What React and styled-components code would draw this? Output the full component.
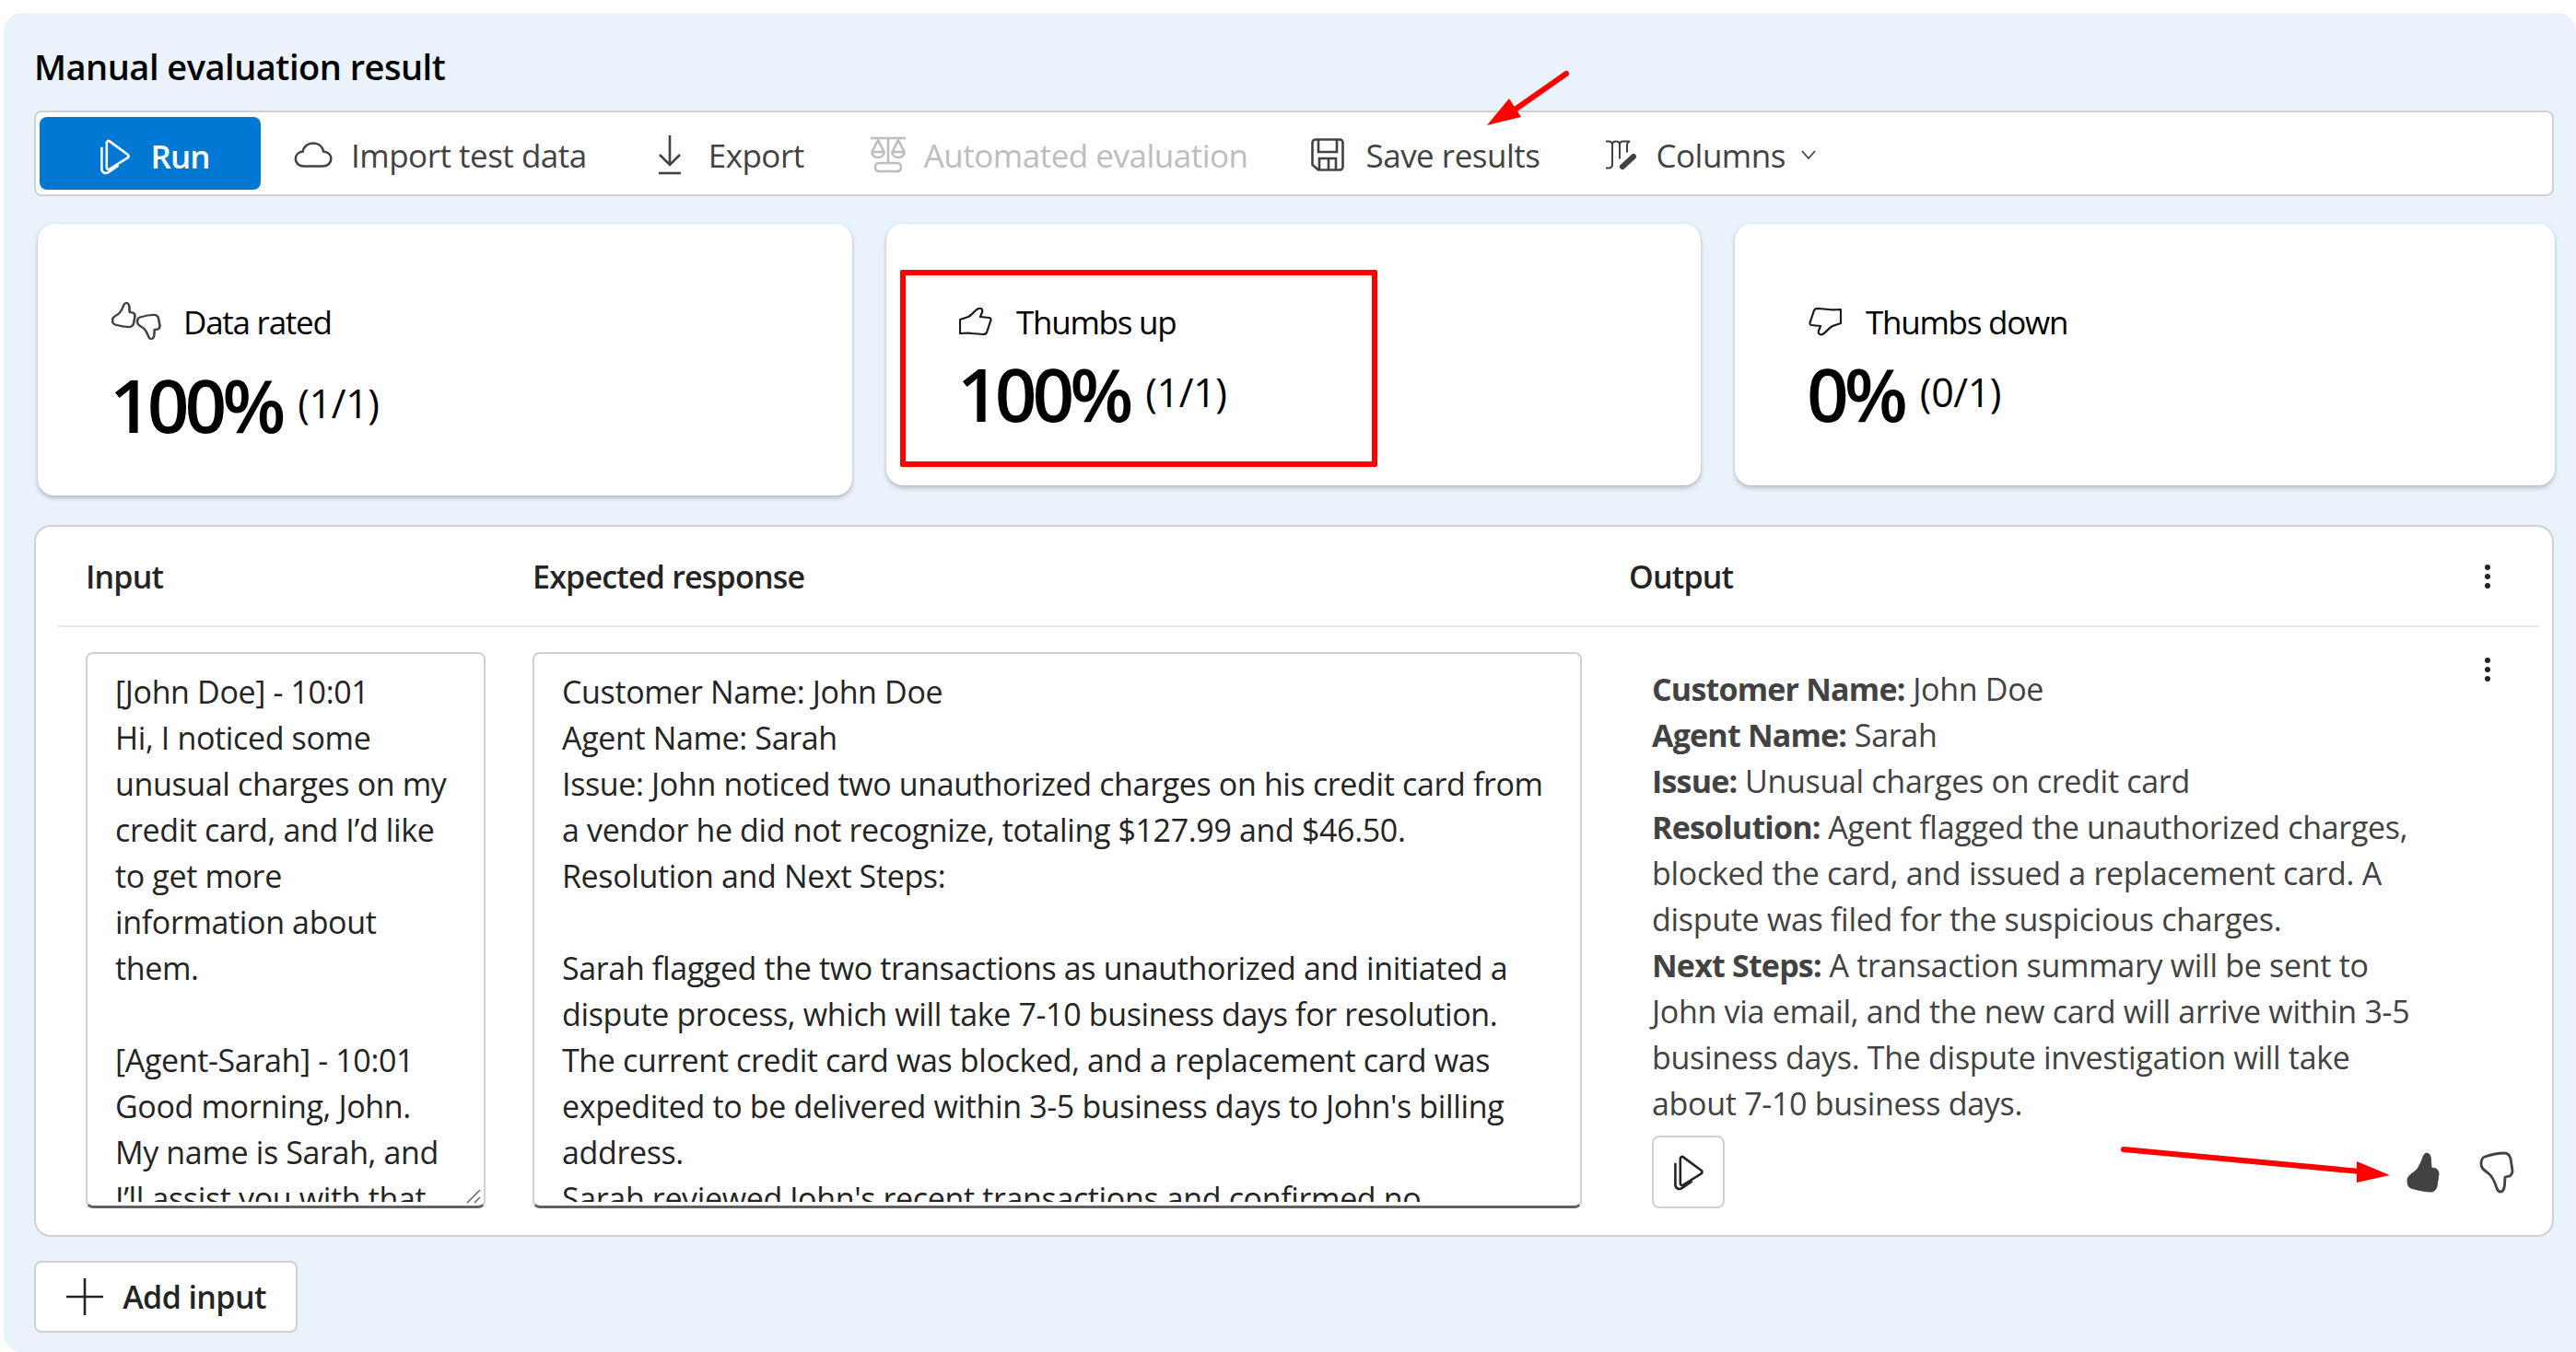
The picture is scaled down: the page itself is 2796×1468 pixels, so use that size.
import React from "react";
import styled, { createGlobalStyle } from "styled-components";

const Global = createGlobalStyle`
  html, body { margin: 0; padding: 0; background: #fff; }
  body { font-family: "Open Sans", "Noto Sans", sans-serif; color: #242424; }
`;

const Page = styled.div`
  position: relative;
  width: 2796px;
  height: 1468px;
  overflow: hidden;
  padding: 14px 0 0 4px;
  box-sizing: border-box;
`;
const Panel = styled.main`
  height: 1454px;
  background: #eaf2fb;
  border-radius: 20px 20px 0 20px;
  padding: 30px 24px 0 33px;
  box-sizing: border-box;
`;
const Title = styled.h1`
  margin: 0 0 20px;
  font-size: 38px;
  line-height: 56px;
  font-weight: 600;
  color: #000;
  letter-spacing: -0.5px;
`;
const Toolbar = styled.div`
  height: 93px;
  box-sizing: border-box;
  background: #fff;
  border: 2px solid #d1d1d1;
  border-radius: 8px;
  display: flex;
  align-items: center;
  padding-left: 4px;
`;
const RunButton = styled.button`
  width: 240px;
  height: 79px;
  border: 0;
  border-radius: 8px;
  background: #0078d4;
  color: #fff;
  font: 600 35px "Open Sans", sans-serif;
  letter-spacing: -1px;
  display: flex;
  align-items: center;
  justify-content: center;
  gap: 20px;
  padding: 6px 0 0 7px;
  margin-right: 36px;
`;
const ToolItem = styled.div`
  display: flex;
  align-items: center;
  gap: ${(p) => p.$gap ?? 24}px;
  margin-right: ${(p) => p.$mr}px;
  font-size: 35px;
  font-weight: 500;
  letter-spacing: -0.5px;
  white-space: nowrap;
  color: ${(p) => (p.$disabled ? "#bdbdbd" : "#424242")};
  padding-top: 3px;
`;
const Cards = styled.div`
  display: flex;
  align-items: flex-start;
  gap: 37px;
  margin: 30px 0 32px 4px;
`;
const Card = styled.section`
  flex: 0 0 ${(p) => p.$w}px;
  height: ${(p) => p.$h}px;
  box-sizing: border-box;
  background: #fff;
  border-radius: 18px;
  box-shadow: 0 3px 5px rgba(0, 0, 0, 0.22), 0 0 3px rgba(0, 0, 0, 0.08);
  padding: ${(p) => p.$pt}px 0 0 ${(p) => p.$pl}px;
`;
const CardHead = styled.div`
  display: flex;
  align-items: center;
  gap: ${(p) => p.$gap ?? 26}px;
  height: 50px;
  font-size: 35px;
  letter-spacing: -1.25px;
  color: #000;
`;
const Stat = styled.div`
  display: flex;
  align-items: baseline;
  gap: 18px;
  margin: ${(p) => p.$mt}px 0 0 -2px;
  color: #000;
`;
const Percent = styled.span`
  font-size: 80px;
  line-height: 96px;
  font-weight: 600;
  letter-spacing: -5px;
`;
const Ratio = styled.span`
  font-size: 43px;
  letter-spacing: -0.4px;
  position: relative;
  top: -16px;
`;
const Table = styled.section`
  height: 773px;
  box-sizing: border-box;
  background: #fff;
  border: 2px solid #d1d1d1;
  border-radius: 18px;
  overflow: hidden;
`;
const HeadRow = styled.div`
  height: 109px;
  margin: 0 14px 0 24px;
  border-bottom: 2px solid #e6e6e6;
  box-sizing: border-box;
  display: grid;
  grid-template-columns: 485px 1190px 1fr 60px;
  align-items: center;
  padding-left: 30px;
  font-size: 34px;
  font-weight: 600;
  letter-spacing: -0.8px;
  color: #242424;
`;
const BodyRow = styled.div`
  display: grid;
  grid-template-columns: 434px 1139px 1fr;
  column-gap: 51px;
  padding: 27px 0 0 54px;
`;
const Area = styled.div`
  position: relative;
  height: 604px;
  box-sizing: border-box;
  border: 2px solid #d1d1d1;
  border-bottom: 3px solid #616161;
  border-radius: 8px;
  padding: 0 ${(p) => p.$pr}px 0 30px;
  overflow: hidden;
  font-size: 34px;
  line-height: 50px;
  letter-spacing: -0.36px;
  color: #242424;
  white-space: pre-wrap;
`;
const AreaText = styled.div`
  height: 595px;
  box-sizing: border-box;
  padding-top: 16px;
  overflow: hidden;
`;
const Grip = styled.svg`
  position: absolute;
  right: 1px;
  bottom: 1px;
`;
const OutputCell = styled.div`
  position: relative;
  padding: 0 0 0 25px;
`;
const OutputText = styled.div`
  font-size: 34px;
  line-height: 50px;
  letter-spacing: -0.3px;
  color: #424242;
  width: 835px;
  margin-top: 15px;
  b { font-weight: 700; letter-spacing: -0.8px; }
`;
const OutputActions = styled.div`
  display: flex;
  align-items: center;
  margin-top: 10px;
  width: 936px;
`;
const PlayButton = styled.button`
  width: 79px;
  height: 79px;
  background: #fff;
  border: 2px solid #d1d1d1;
  border-radius: 8px;
  display: flex;
  align-items: center;
  justify-content: center;
  padding: 0;
  margin-right: auto;
`;
const RateIcons = styled.div`
  display: flex;
  align-items: center;
  gap: 42px;
`;
const MoreDots = styled.div`
  display: flex;
  flex-direction: column;
  gap: 4px;
  justify-self: start;
  margin-left: 1px;
  span {
    display: block;
    width: 6px;
    height: 6px;
    border-radius: 50%;
    background: #242424;
  }
`;
const OutputMore = styled(MoreDots)`
  position: absolute;
  top: 6px;
  right: 67px;
`;
const AddButton = styled.button`
  margin-top: 26px;
  width: 286px;
  height: 78px;
  background: #fff;
  border: 2px solid #d1d1d1;
  border-radius: 8px;
  display: flex;
  align-items: center;
  justify-content: center;
  gap: 20px;
  font: 600 34px "Open Sans", sans-serif;
  letter-spacing: -0.6px;
  color: #242424;
  padding: 0;
`;
const RedBox = styled.div`
  position: absolute;
  left: 977px;
  top: 293px;
  width: 518px;
  height: 214px;
  box-sizing: border-box;
  border: 6px solid #ff0000;
  border-radius: 2px;
`;
const Overlay = styled.svg`
  position: absolute;
  left: 0;
  top: 0;
  pointer-events: none;
`;
const ChevronSvg = styled.svg`
  margin-left: -4px;
`;

const PlayIcon = ({ color = "#242424" }) => (
  <svg width="38" height="40" viewBox="4 1 31 37" fill="none" stroke={color} strokeWidth="2.400" strokeLinejoin="round" strokeLinecap="round">
    <path d="M11 5.500c0-1.600 1.600-2.400 2.900-1.400L32 17.400c1.300 1 1.300 2.400 0 3.400L14 32c-1.400.9-3 .1-3-1.500V5.500z" />
    <path d="M6 11v21c0 3.400 3.700 5.300 6.500 3.400L22 29" />
  </svg>
);
const Cloud = () => (
  <svg width="42" height="30" viewBox="0 0 42 30" fill="none" stroke="#424242" strokeWidth="2.600">
    <path d="M11 27.500C5.500 27.500 1.800 24 1.800 19.500c0-4.300 3.200-7.600 7.800-8 .9-5.200 5.400-9 11.300-9 5.800 0 10.200 3.500 11.300 9 4.800.4 8.100 3.700 8.100 8 0 4.600-3.800 8-9.300 8H11z" />
  </svg>
);
const ExportIcon = () => (
  <svg width="28" height="44" viewBox="0 0 28 44" fill="none" stroke="#424242" strokeWidth="2.600">
    <path d="M14 1v32M3 22l11 11 11-11" />
    <path d="M2 42h24" />
  </svg>
);
const ScaleIcon = () => (
  <svg width="42" height="40" viewBox="0 0 42 40" fill="none" stroke="#bdbdbd" strokeWidth="2.600" strokeLinejoin="round">
    <path d="M2 2h38M21 2v26" />
    <path d="M10 4 3.500 17h13L10 4zM32 4l-6.500 13h13L32 4z" />
    <path d="M3.500 17c0 3.500 2.900 6 6.500 6s6.500-2.500 6.500-6M25.500 17c0 3.500 2.900 6 6.500 6s6.500-2.500 6.500-6" />
    <rect x="7" y="29" width="28" height="9" rx="4" />
  </svg>
);
const SaveIcon = () => (
  <svg width="36" height="36" viewBox="0 0 36 36" fill="none" stroke="#424242" strokeWidth="2.600">
    <path d="M5 1.500h26a3.500 3.500 0 0 1 3.500 3.500v26a3.500 3.500 0 0 1-3.500 3.500H8L1.500 29V5A3.500 3.500 0 0 1 5 1.500z" />
    <path d="M8 2v13h20V2" />
    <path d="M9 34V22h18v12M19 22v12" />
  </svg>
);
const ColumnsIcon = () => (
  <svg width="34" height="33" viewBox="0 0 34 33" fill="none" stroke="#424242" strokeWidth="2">
    <path d="M0 1.500h3c2.500 0 4 1.500 4 4v21c0 2.500-1.500 4-4 4H0" />
    <path d="M7 5.500c0-2.500 1.500-4 4-4s4 1.500 4 4v15" />
    <path d="M15 5.500c0-2.500 1.500-4 3.500-4H26c-2 .5-3 2-3 4v8" />
    <path d="M30 18 18 29" strokeWidth="6" strokeLinecap="round" />
  </svg>
);
const Chevron = () => (
  <ChevronSvg width="18" height="12" viewBox="0 0 18 12" fill="none" stroke="#424242" strokeWidth="1.800">
    <path d="M2 2l7 8 7-8" />
  </ChevronSvg>
);
const flatThumb =
  "M1 13 L10 10 C14 8 18 2 21 1 C24 0 26 2 25 5 L23 10 L33 11 C35 12 35 13 34 15 L30 27 C29 29 28 29 26 29 L14 28 C10 27 6 28 1 28 Z";
const FlatThumbUp = () => (
  <svg width="36" height="31" viewBox="0 0 36 31" fill="none" stroke="#1a1a1a" strokeWidth="2.200" strokeLinejoin="round">
    <path d={flatThumb} />
  </svg>
);
const FlatThumbDown = () => (
  <svg width="36" height="31" viewBox="0 0 36 31" fill="none" stroke="#1a1a1a" strokeWidth="2.200" strokeLinejoin="round">
    <path d={flatThumb} transform="rotate(180 18 15)" />
  </svg>
);
const tallThumb =
  "M0 30 C0 25 4 23 8 20 C12 17 15 10 17 4 C18 1 20 0 21 0 C24 0 25 3 25.500 7 L26 16 L31 17 C33 18 34 20 34 23 L32 36 C31 40 29 42 25 42 C20 42 10 40 4 38 C1 37 0 34 0 30Z";
const TallThumbUp = () => (
  <svg width="38" height="46" viewBox="-2 -2 38 46" fill="#424242" stroke="#424242" strokeWidth="1">
    <path d={tallThumb} />
  </svg>
);
const TallThumbDown = () => (
  <svg width="38" height="46" viewBox="-2 -2 38 46" fill="none" stroke="#424242" strokeWidth="2.800" strokeLinejoin="round">
    <path d={tallThumb} transform="matrix(1 0 0 -1 0 42)" />
  </svg>
);
const BothThumbs = () => (
  <svg width="54" height="42" viewBox="0 0 54 42" fill="none" stroke="#424242" strokeWidth="3.600" strokeLinejoin="round">
    <path d={tallThumb} transform="translate(1 1) scale(.72 .62)" />
    <path d={tallThumb} transform="translate(28 40) scale(.72 -.62)" />
  </svg>
);

const inputText = `[John Doe] - 10:01
Hi, I noticed some unusual charges on my credit card, and I’d like to get more information about them.

[Agent-Sarah] - 10:01
Good morning, John. My name is Sarah, and I’ll assist you with that today.`;
const expectedText = `Customer Name: John Doe
Agent Name: Sarah
Issue: John noticed two unauthorized charges on his credit card from a vendor he did not recognize, totaling $127.99 and $46.50.
Resolution and Next Steps:

Sarah flagged the two transactions as unauthorized and initiated a dispute process, which will take 7-10 business days for resolution.
The current credit card was blocked, and a replacement card was expedited to be delivered within 3-5 business days to John's billing address.
Sarah reviewed John's recent transactions and confirmed no unauthorized activity.`;

export default function App() {
  return (
    <Page>
      <Global />
      <Panel>
        <Title>Manual evaluation result</Title>
        <Toolbar>
          <RunButton><PlayIcon color="#fff" />Run</RunButton>
          <ToolItem $mr={76} $gap={20}><Cloud />Import test data</ToolItem>
          <ToolItem $mr={70} $gap={28}><ExportIcon />Export</ToolItem>
          <ToolItem $mr={68} $disabled $gap={18}><ScaleIcon />Automated evaluation</ToolItem>
          <ToolItem $mr={72} $gap={24}><SaveIcon />Save results</ToolItem>
          <ToolItem $mr={0} $gap={20}><ColumnsIcon />Columns<Chevron /></ToolItem>
        </Toolbar>
        <Cards>
          <Card $w={884} $h={295} $pt={81} $pl={80}>
            <CardHead $gap={24}><BothThumbs />Data rated</CardHead>
            <Stat $mt={17}><Percent>100%</Percent><Ratio>(1/1)</Ratio></Stat>
          </Card>
          <Card $w={884} $h={284} $pt={81} $pl={79}>
            <CardHead><FlatThumbUp />Thumbs up</CardHead>
            <Stat $mt={5}><Percent>100%</Percent><Ratio>(1/1)</Ratio></Stat>
          </Card>
          <Card $w={890} $h={284} $pt={81} $pl={80}>
            <CardHead><FlatThumbDown />Thumbs down</CardHead>
            <Stat $mt={5}><Percent>0%</Percent><Ratio>(0/1)</Ratio></Stat>
          </Card>
        </Cards>
        <Table>
          <HeadRow>
            <span>Input</span>
            <span>Expected response</span>
            <span>Output</span>
            <MoreDots><span /><span /><span /></MoreDots>
          </HeadRow>
          <BodyRow>
            <Area $pr={38}>
              <AreaText>{inputText}</AreaText>
              <Grip width="20" height="20" viewBox="0 0 20 20" stroke="#616161" strokeWidth="1.500"><path d="M3 18 17 4M11 18l6-6" /></Grip>
            </Area>
            <Area $pr={30}><AreaText>{expectedText}</AreaText></Area>
            <OutputCell>
              <OutputMore><span /><span /><span /></OutputMore>
              <OutputText>
                <b>Customer Name:</b> John Doe<br />
                <b>Agent Name:</b> Sarah<br />
                <b>Issue:</b> Unusual charges on credit card<br />
                <b>Resolution:</b> Agent flagged the unauthorized charges, blocked the card, and issued a replacement card. A dispute was filed for the suspicious charges.<br />
                <b>Next Steps:</b> A transaction summary will be sent to John via email, and the new card will arrive within 3-5 business days. The dispute investigation will take about 7-10 business days.
              </OutputText>
              <OutputActions>
                <PlayButton><PlayIcon /></PlayButton>
                <RateIcons>
                  <TallThumbUp />
                  <TallThumbDown />
                </RateIcons>
              </OutputActions>
            </OutputCell>
          </BodyRow>
        </Table>
        <AddButton>
          <svg width="42" height="42" viewBox="0 0 42 42" stroke="#242424" strokeWidth="2.600"><path d="M21 1v40M1 21h40" /></svg>
          Add input
        </AddButton>
      </Panel>
      <RedBox />
      <Overlay width="2796" height="1468" viewBox="0 0 2796 1468">
        <path d="M1700 80 1640 122" stroke="#ff0000" strokeWidth="6" strokeLinecap="round" />
        <path d="M1614 136 1638 107 1651 127z" fill="#ff0000" />
        <path d="M2305 1248 2562 1272" stroke="#ff0000" strokeWidth="6" strokeLinecap="round" />
        <path d="M2594 1276 2558 1261 2558 1284z" fill="#ff0000" />
      </Overlay>
    </Page>
  );
}
